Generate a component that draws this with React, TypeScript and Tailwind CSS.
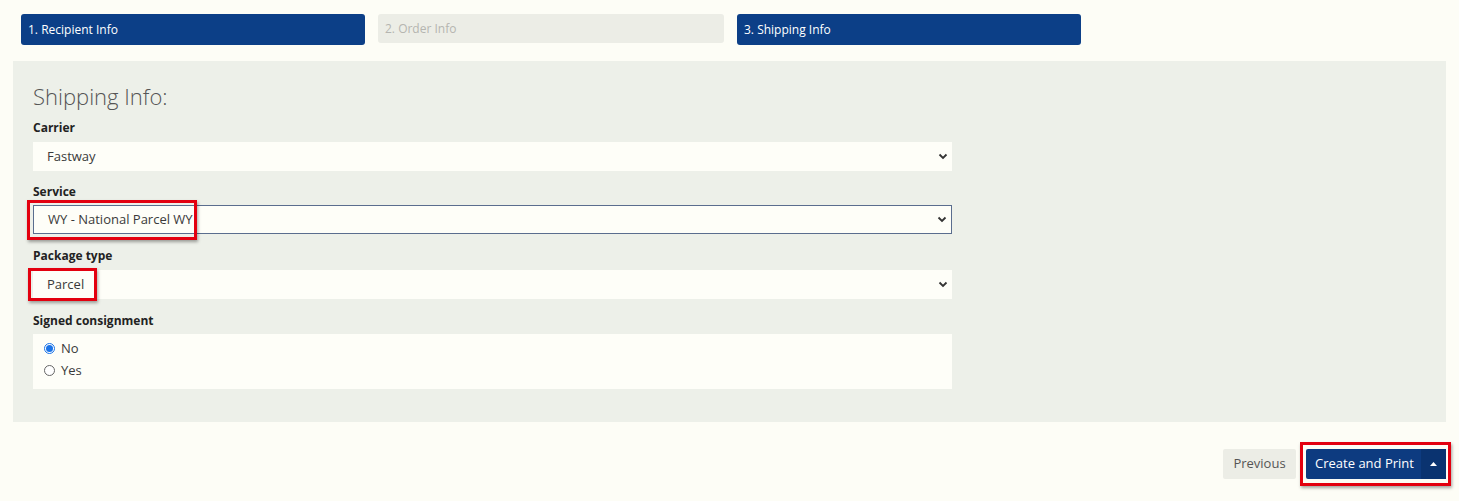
import React from "react";

const Chevron = () => (
  <svg width="10" height="7" viewBox="0 0 10 7" className="shrink-0">
    <path d="M1.5 1.5 L5 5 L8.5 1.5" fill="none" stroke="#333" strokeWidth="1.8" />
  </svg>
);

function Select({ value, focused }: { value: string; focused?: boolean }) {
  return (
    <div
      className={
        "flex h-[29px] w-[919px] items-center justify-between bg-[#fefef8] pl-[14px] pr-[4px] text-[13px] text-[#3a3a3a] " +
        (focused ? "border border-[#5a6d8e]" : "")
      }
    >
      <span>{value}</span>
      <Chevron />
    </div>
  );
}

const RedBox = ({ className }: { className: string }) => (
  <div
    className={
      "pointer-events-none absolute border-[3px] border-[#e3000f] shadow-[1px_2px_3px_rgba(0,0,0,0.35)] " + className
    }
  />
);

export default function App() {
  return (
    <div
      className="min-h-[501px] bg-[#fdfdf6] pt-[14px]"
      style={{ fontFamily: "'Open Sans', 'Noto Sans', sans-serif" }}
    >
      <div className="flex gap-[13px] pl-[21px]">
        <div className="flex h-[31px] w-[344px] items-center rounded-[3px] bg-[#0c3f87] px-[7px] text-[12px] text-white">
          1. Recipient Info
        </div>
        <div className="flex h-[29px] w-[346px] items-center rounded-[3px] bg-[#ecede6] px-[7px] text-[12px] text-[#b5b5b0]">
          2. Order Info
        </div>
        <div className="flex h-[31px] w-[344px] items-center rounded-[3px] bg-[#0c3f87] px-[7px] text-[12px] text-white">
          3. Shipping Info
        </div>
      </div>

      <div className="mx-[13px] mt-[16px] h-[361px] bg-[#edf0e9] pl-[20px] pt-[20px]">
        <div className="text-[22px] font-light leading-[30px] text-[#555]">Shipping Info:</div>
        <div className="mt-[9px] text-[12px] font-bold leading-[16px] text-[#222]">Carrier</div>
        <div className="mt-[6px]">
          <Select value="Fastway" />
        </div>
        <div className="mt-[13px] text-[12px] font-bold leading-[16px] text-[#222]">Service</div>
        <div className="relative mt-[5px]">
          <Select value="WY - National Parcel WY" focused />
          <RedBox className="left-[-6px] top-[-5px] h-[40px] w-[170px]" />
        </div>
        <div className="mt-[14px] text-[12px] font-bold leading-[16px] text-[#222]">Package type</div>
        <div className="relative mt-[6px]">
          <Select value="Parcel" />
          <RedBox className="left-[-5px] top-[-2px] h-[33px] w-[69px]" />
        </div>
        <div className="mt-[14px] text-[12px] font-bold leading-[16px] text-[#222]">Signed consignment</div>
        <div className="mt-[5px] flex h-[55px] w-[919px] flex-col gap-[6px] bg-[#fefef8] pl-[11px] pt-[6px] text-[13px] text-[#3a3a3a]">
          <label className="flex items-center gap-[6px] leading-[16px]">
            <span className="flex h-[11px] w-[11px] items-center justify-center rounded-full border border-[#1a73e8] bg-white">
              <span className="h-[7px] w-[7px] rounded-full bg-[#1a73e8]" />
            </span>
            No
          </label>
          <label className="flex items-center gap-[6px] leading-[16px]">
            <span className="h-[11px] w-[11px] rounded-full border border-[#666] bg-white" />
            Yes
          </label>
        </div>
      </div>

      <div className="mt-[27px] flex justify-end gap-[10px] pr-[13px]">
        <div className="flex h-[30px] w-[73px] items-center justify-center rounded-[2px] bg-[#ecede6] text-[13px] text-[#555]">
          Previous
        </div>
        <div className="relative flex h-[30px] rounded-[2px] bg-[#0d3b80] text-[13px] text-white">
          <div className="flex w-[115px] items-center justify-center pl-[2px]">Create and Print</div>
          <div className="flex w-[25px] items-center justify-center bg-[#0a3370]">
            <svg width="7" height="4" viewBox="0 0 7 4">
              <path d="M0 4 L3.5 0 L7 4 Z" fill="#fff" />
            </svg>
          </div>
          <RedBox className="left-[-6px] top-[-7px] h-[44px] w-[151px]" />
        </div>
      </div>
    </div>
  );
}
